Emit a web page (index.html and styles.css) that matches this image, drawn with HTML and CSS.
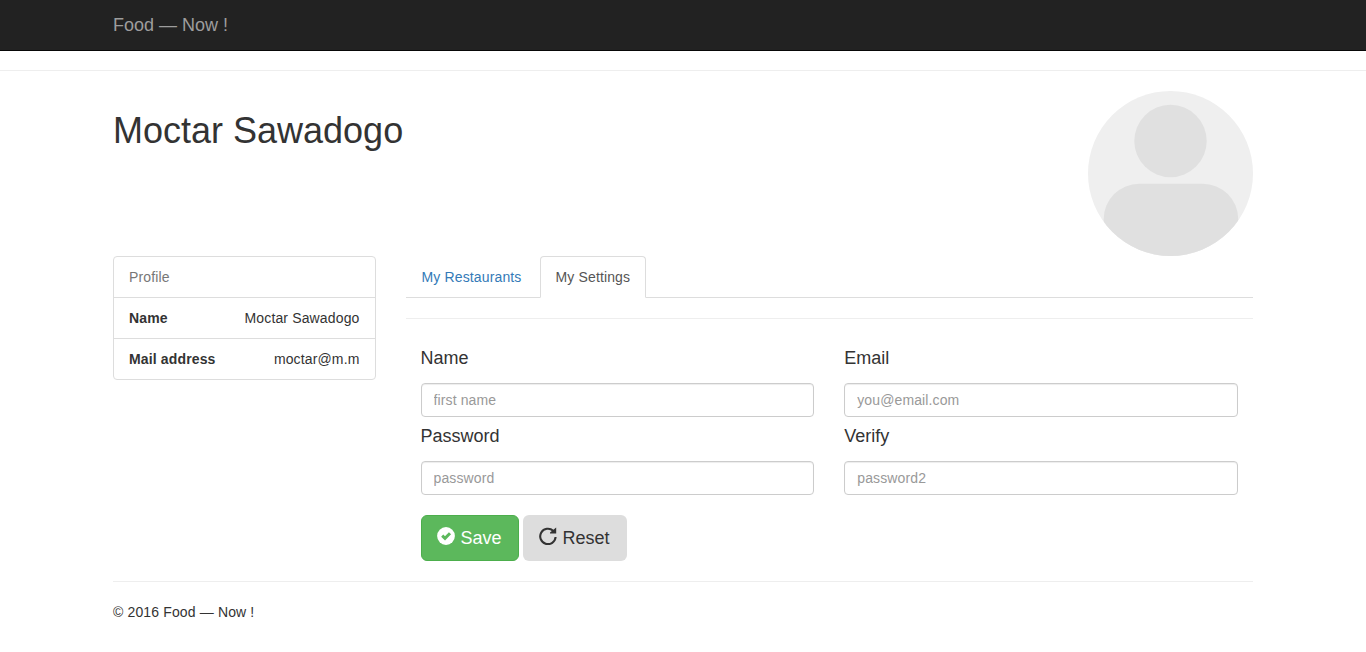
FILE: index.html
```html
<!DOCTYPE html>
<html lang="en">
<head>
<meta charset="utf-8">
<title>Food — Now !</title>
<link rel="stylesheet" href="styles.css">
</head>
<body>
<nav class="navbar"><div class="container"><a class="brand">Food — Now !</a></div></nav>
<hr>
<div class="container">
  <header class="profile-header">
    <h1>Moctar Sawadogo</h1>
    <svg class="avatar" viewBox="0 0 165 165">
      <defs><clipPath id="round"><circle cx="82.5" cy="82.5" r="82.5"/></clipPath></defs>
      <g clip-path="url(#round)">
        <rect width="165" height="165" fill="#efefef"/>
        <circle cx="82.5" cy="50" r="36.2" fill="#e0e0e0"/>
        <rect x="15.7" y="92.7" width="134.5" height="110" rx="35.5" fill="#e0e0e0"/>
      </g>
    </svg>
  </header>
  <div class="columns">
    <aside>
      <ul class="list-group">
        <li class="muted">Profile</li>
        <li><strong>Name</strong><span>Moctar Sawadogo</span></li>
        <li><strong>Mail address</strong><span>moctar@m.m</span></li>
      </ul>
    </aside>
    <main>
      <ul class="tabs">
        <li><a>My Restaurants</a></li>
        <li><a class="active">My Settings</a></li>
      </ul>
      <hr>
      <form>
        <div class="fields">
          <div class="field"><label for="name">Name</label><input id="name" type="text" placeholder="first name"></div>
          <div class="field"><label for="email">Email</label><input id="email" type="email" placeholder="you@email.com"></div>
          <div class="field"><label for="password">Password</label><input id="password" type="password" placeholder="password"></div>
          <div class="field"><label for="verify">Verify</label><input id="verify" type="password" placeholder="password2"></div>
        </div>
        <div class="actions">
          <button class="btn btn-save" type="submit"><svg class="icon" viewBox="0 0 18 18"><circle cx="9" cy="9" r="8.9" fill="#fff"/><path d="M5.2 8.6 8 11.3 13 6.3" fill="none" stroke="#5cb85c" stroke-width="3"/></svg><span>Save</span></button>
          <button class="btn btn-reset" type="reset"><svg class="icon" viewBox="0 0 18 18"><path d="M14.2 3.8A7.7 7.7 0 1 0 16.6 10" fill="none" stroke="#333" stroke-width="2.1"/><path d="M17.2 .4V6.6H11V5.4Z" fill="#333"/></svg><span>Reset</span></button>
        </div>
      </form>
    </main>
  </div>
  <hr>
  <footer>© 2016 Food — Now !</footer>
</div>
</body>
</html>
```
FILE: styles.css
```css
* { box-sizing: border-box; }
body {
  margin: 0;
  font: 14px/20px "Liberation Sans", Arial, sans-serif;
  letter-spacing: .14px;
  color: #333;
  background: #fff;
}
.container { width: 1170px; margin: 0 auto; padding: 0 15px; }
.navbar { height: 51px; background: #222; border-bottom: 1px solid #080808; }
.brand { display: block; padding: 15px 0; font-size: 18px; letter-spacing: 0; color: #9d9d9d; }
hr { height: 1px; margin: 19px 0 20px; border: 0; background: #eee; }
ul { margin: 0; padding: 0; list-style: none; }
.profile-header { display: flex; justify-content: space-between; height: 165px; }
h1 { margin: 20px 0 0; font-size: 36px; font-weight: 500; line-height: 39px; letter-spacing: 0; }
.avatar { width: 165px; height: 165px; }
.columns { display: grid; grid-template-columns: 262.5px 847.5px; gap: 30px; align-items: start; }
.list-group { border: 1px solid #ddd; border-radius: 4px; }
.list-group li { display: flex; justify-content: space-between; height: 41px; padding: 10px 15px; }
.list-group li + li { border-top: 1px solid #ddd; }
.list-group .muted { height: 40px; color: #777; }
.tabs { display: flex; gap: 2px; height: 42px; border-bottom: 1px solid #ddd; }
.tabs a {
  display: block;
  height: 42px;
  padding: 10px 15px;
  border: 1px solid transparent;
  border-radius: 4px 4px 0 0;
  color: #337ab7;
}
.tabs .active { color: #555; background: #fff; border-color: #ddd #ddd #fff; }
main hr { margin-top: 20px; }
form { padding: 0 15px; }
.fields { display: grid; grid-template-columns: 1fr 1fr; column-gap: 30px; }
.field { height: 78px; padding-top: 10px; }
label { display: block; height: 19px; margin-bottom: 15px; font-size: 18px; line-height: 19px; letter-spacing: 0; }
input {
  display: block;
  width: 100%;
  height: 34px;
  padding: 6px 12px;
  border: 1px solid #ccc;
  border-radius: 4px;
  font: inherit;
  letter-spacing: .12px;
  color: #555;
  background: #fff;
  box-shadow: inset 0 1px 1px rgba(0, 0, 0, .075);
}
input::placeholder { color: #999; }
.actions { display: flex; gap: 4px; padding-top: 20px; }
.btn {
  display: flex;
  align-items: center;
  gap: 5px;
  height: 46px;
  padding: 0 16px;
  border: 1px solid transparent;
  border-radius: 6px;
  font: 18px/24px "Liberation Sans", Arial, sans-serif;
}
.btn-save { color: #fff; background: #5cb85c; border-color: #4cae4c; }
.btn-reset { color: #333; background: #ddd; }
.icon { width: 18px; height: 18px; margin: 0 .5px 4px -.5px; }
.columns + hr { margin-top: 20px; }
```
